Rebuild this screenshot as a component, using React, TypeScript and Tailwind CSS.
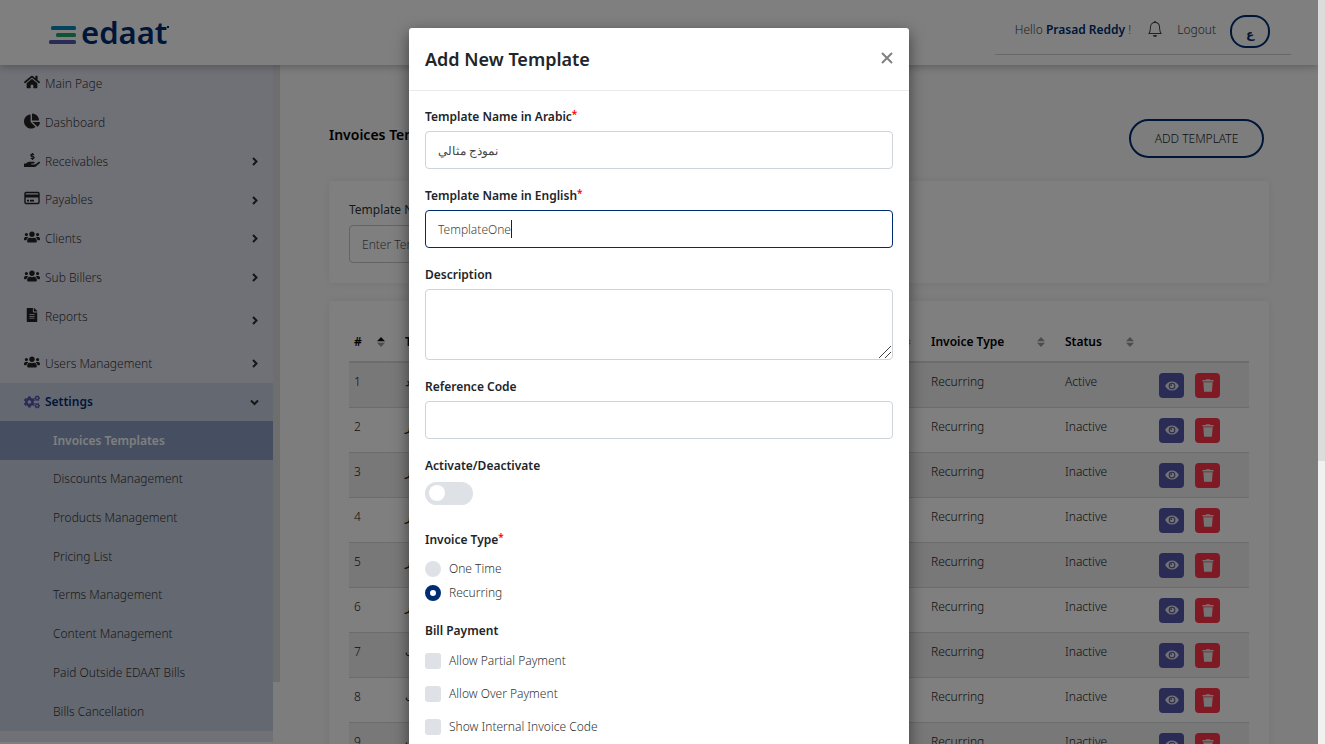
import { useState } from "react";
import type { ReactNode } from "react";
import type { IconType } from "react-icons";
import { FaChartPie, FaCogs, FaFileAlt, FaHandHoldingUsd, FaHome, FaUsers } from "react-icons/fa";
import { BsBell } from "react-icons/bs";

function CardIcon() {
  return (
    <svg width="16" height="16" viewBox="0 0 16 16" className="mb-1" aria-hidden="true">
      <rect x="1" y="2.5" width="14" height="11" rx="1" fill="none" stroke="#222" strokeWidth="1.4" />
      <path d="M1 4.5h14v3H1zM3 9.8h2v1.6H3zM6 9.8h4v1.6H6z" fill="#222" />
    </svg>
  );
}

const topLinks: { label: string; icon: IconType; expands: boolean }[] = [
  { label: "Main Page", icon: FaHome, expands: false },
  { label: "Dashboard", icon: FaChartPie, expands: false },
  { label: "Receivables", icon: FaHandHoldingUsd, expands: true },
  { label: "Payables", icon: CardIcon, expands: true },
  { label: "Clients", icon: FaUsers, expands: true },
  { label: "Sub Billers", icon: FaUsers, expands: true },
];

const settingsLinks = [
  "Discounts Management",
  "Products Management",
  "Pricing List",
  "Terms Management",
  "Content Management",
  "Paid Outside EDAAT Bills",
  "Bills Cancellation",
];

const templates = [
  { id: 1, ar: "نموذج جديد", en: "New", status: "Active" },
  { id: 2, ar: "نموذج شهر", en: "Month", status: "Inactive" },
  { id: 3, ar: "نموذج شهر", en: "Month", status: "Inactive" },
  { id: 4, ar: "نموذج شهر", en: "Month", status: "Inactive" },
  { id: 5, ar: "نموذج شهر", en: "Month", status: "Inactive" },
  { id: 6, ar: "نموذج شهر", en: "Month", status: "Inactive" },
  { id: 7, ar: "نموذج طلب", en: "Order", status: "Inactive" },
  { id: 8, ar: "نموذج طلب", en: "Order", status: "Inactive" },
  { id: 9, ar: "نموذج طلب", en: "Order", status: "Inactive" },
];

function Logo() {
  return (
    <a href="#home" aria-label="edaat" className="flex items-center gap-1 text-[#002d72]">
      <svg width="28" height="20" viewBox="0 0 28 20" className="mt-[8px]" aria-hidden="true">
        <rect x="2" y="0" width="25" height="4" rx="1.5" fill="#0a86b8" />
        <rect x="7" y="7" width="20" height="4" rx="1.5" fill="#22a268" />
        <rect x="0" y="14" width="27" height="4" rx="1.5" fill="#5558ac" />
      </svg>
      <span className="flex items-start text-[31px] leading-9 font-semibold">
        edaat
        <span className="mt-[12px] size-[2px] bg-[#002d72]" />
      </span>
    </a>
  );
}

function Header() {
  return (
    <header className="relative z-10 flex h-[65px] shrink-0 items-start justify-between bg-white pr-[27px] pl-[49px] shadow-[0_2px_8px_rgba(0,0,0,0.25)]">
      <div className="pt-[14px]">
        <Logo />
      </div>
      <div className="flex h-[55px] items-start border-b border-[#ced0d4] pt-[15px] pr-[21px] pl-5 text-xs text-[#444]">
        <span className="leading-[30px] font-light">
          Hello <b className="font-semibold text-[#002d72]">Prasad Reddy</b> !
        </span>
        <button type="button" aria-label="Notifications" className="mt-[6px] ml-4">
          <BsBell size={16} />
        </button>
        <a href="#logout" className="ml-[14px] leading-[30px] font-light">
          Logout
        </a>
        <button
          type="button"
          lang="ar"
          className="ml-[14px] h-[33px] w-10 rounded-2xl border-2 border-[#002d72] pt-1 text-xs leading-5 font-semibold text-[#002d72]"
        >
          ع
        </button>
      </div>
    </header>
  );
}

function Chevron({ down = false }: { down?: boolean }) {
  return (
    <svg width="9" height="9" viewBox="0 0 9 9" fill="none" stroke="#2c2c2c" strokeWidth="2" aria-hidden="true">
      <path d={down ? "M1 2.5l3.5 3.5L8 2.5" : "M3 1l3.5 3.5L3 8"} />
    </svg>
  );
}

function NavLink({ label, icon: Icon, expands }: { label: string; icon: IconType; expands: boolean }) {
  return (
    <a href="#section" className="flex items-center pr-[14px] pl-6 text-[#333]">
      <Icon size={16} className="mb-1 w-4 text-[#222]" />
      <span className="ml-[5px] flex-1">{label}</span>
      {expands && <Chevron />}
    </a>
  );
}

function Sidebar() {
  return (
    <div className="flex w-[280px] shrink-0 items-start">
      <nav className="h-[677px] w-[273px] bg-[#e1e3ef] text-xs font-light">
        <div className="grid h-[232px] grid-rows-6">
          {topLinks.map((link) => (
            <NavLink key={link.label} {...link} />
          ))}
        </div>
        <a href="#reports" className="flex h-[47px] items-center pr-[14px] pl-6 text-[#333]">
          <span className="mb-2 flex flex-1 items-center gap-[5px]">
            <FaFileAlt size={14} className="mb-1 w-4 text-[#222]" />
            Reports
          </span>
          <Chevron />
        </a>
        <div className="grid h-[39px]">
          <NavLink label="Users Management" icon={FaUsers} expands />
        </div>
        <div className="bg-[#c9d1e1]">
          <a href="#settings" className="flex h-[38px] items-center pr-[14px] pl-6 font-semibold text-[#002d72]">
            <FaCogs size={16} className="text-[#5558ac]" />
            <span className="ml-[5px] flex-1">Settings</span>
            <Chevron down />
          </a>
          <a href="#invoices" className="flex h-[39px] items-center bg-[#8b9ec2] pl-[53px] font-semibold text-white">
            Invoices Templates
          </a>
          <div className="grid h-[271px] grid-rows-7 pl-[53px]">
            {settingsLinks.map((label) => (
              <a key={label} href="#settings-page" className="flex items-center text-[#333]">
                {label}
              </a>
            ))}
          </div>
        </div>
      </nav>
      <div className="h-[617px] flex-1 bg-[#dcdcdc]" />
    </div>
  );
}

function EyeIcon() {
  return (
    <svg width="14" height="10" viewBox="0 0 14 10" aria-hidden="true">
      <path d="M7 .5C3.9.5 1.4 2.3.2 5c1.2 2.7 3.7 4.5 6.8 4.5s5.6-1.8 6.8-4.5C12.6 2.3 10.1.5 7 .5z" fill="currentColor" />
      <circle cx="7" cy="5" r="2.8" fill="none" stroke="#5558ac" strokeWidth="1.1" />
      <path d="M7 5V3.4H5.400V5z" fill="#5558ac" />
    </svg>
  );
}

function TrashIcon() {
  return (
    <svg width="12" height="13" viewBox="0 0 12 13" fill="currentColor" aria-hidden="true">
      <path d="M.5 1h3.200l.6-.8h3.400l.6.8h3.200v1.500H.5zM1.300 3.200h9.400l-.8 9.600H2.100z" />
    </svg>
  );
}

function SortIcon({ active = false }: { active?: boolean }) {
  return (
    <svg width="8" height="10" viewBox="0 0 8 10" className="shrink-0" aria-hidden="true">
      <path d="M4 0 8 4.2H0z" fill={active ? "#111" : "#999"} />
      <path d="M0 5.8H8L4 10z" fill="#999" />
    </svg>
  );
}

function HeadCell({ children, active }: { children: ReactNode; active?: boolean }) {
  return (
    <th scope="col" className="border-b-2 border-[#d5d8dc] px-[5px] pt-[2px] text-left font-semibold">
      <span className="flex items-center justify-between pr-[10px]">
        <span className="truncate">{children}</span>
        <SortIcon active={active} />
      </span>
    </th>
  );
}

function TemplatesTable() {
  return (
    <table className="w-full table-fixed border-collapse text-xs text-[#222]">
      <colgroup>
        <col className="w-[51px]" />
        <col />
        <col />
        <col className="w-[134px]" />
        <col className="w-[89px]" />
        <col className="w-[100px]" />
      </colgroup>
      <thead>
        <tr className="h-[42px] text-black">
          <HeadCell active>#</HeadCell>
          <HeadCell>Template Name in Arabic</HeadCell>
          <HeadCell>Template Name in English</HeadCell>
          <HeadCell>Invoice Type</HeadCell>
          <HeadCell>Status</HeadCell>
          <th scope="col" className="border-b-2 border-[#d5d8dc]" aria-label="Actions" />
        </tr>
      </thead>
      <tbody className="font-light">
        {templates.map((row) => (
          <tr key={row.id} className="h-[45px] border-b border-[#d5d8dc] align-top odd:bg-[#f0f0f0]">
            <td className="px-[5px] pt-[11px]">{row.id}</td>
            <td className="px-[5px] pt-[11px]">{row.ar}</td>
            <td className="px-[5px] pt-[11px]">{row.en}</td>
            <td className="px-[5px] pt-[11px]">Recurring</td>
            <td className="px-[5px] pt-[11px]">{row.status}</td>
            <td className="pt-[10px] pl-[10px]">
              <div className="flex gap-[11px]">
                <button type="button" aria-label="View" className="grid size-[25px] place-items-center rounded-[4px] bg-[#5558ac] text-[#e8e8e8]">
                  <EyeIcon />
                </button>
                <button type="button" aria-label="Delete" className="grid size-[25px] place-items-center rounded-[4px] bg-[#ff3347] text-[#e8e8e8]">
                  <TrashIcon />
                </button>
              </div>
            </td>
          </tr>
        ))}
      </tbody>
    </table>
  );
}

function MainContent() {
  return (
    <main className="min-w-0 flex-1 px-[49px] pt-[54px]">
      <div className="flex items-center justify-between pr-[5px]">
        <h1 className="mb-2 text-sm font-semibold text-black">Invoices Templates</h1>
        <button type="button" className="h-[39px] w-[135px] rounded-[20px] border-2 border-[#002d72] text-xs font-light text-[#222]">
          ADD TEMPLATE
        </button>
      </div>
      <section className="mt-[23px] h-[102px] rounded bg-white px-5 pt-5 shadow-[0_0_8px_rgba(0,0,0,0.08)]">
        <label htmlFor="search" className="block text-xs leading-[18px] text-[#333]">
          Template Name
        </label>
        <input
          id="search"
          placeholder="Enter Template Name"
          className="mt-[6px] h-[38px] w-[280px] rounded border border-[#c3c8ce] bg-white px-3 text-xs font-light placeholder:text-[#555]"
        />
      </section>
      <section className="mt-[18px] rounded bg-white px-5 pt-[19px] pb-5 shadow-[0_0_8px_rgba(0,0,0,0.08)]">
        <TemplatesTable />
      </section>
    </main>
  );
}

const fieldClass =
  "block w-full rounded border border-[#ced4da] bg-white px-3 text-xs font-light text-[#444] outline-none";

function RequiredMark() {
  return <span className="align-top text-[10px] leading-3 text-[#f00]">*</span>;
}

function FieldLabel({ htmlFor, children, required }: { htmlFor: string; children: ReactNode; required?: boolean }) {
  return (
    <label htmlFor={htmlFor} className="mb-[5px] block text-xs leading-[18px] font-semibold text-[#212529]">
      {children}
      {required && <RequiredMark />}
    </label>
  );
}

function RadioOption({ label, checked, onSelect }: { label: string; checked: boolean; onSelect: () => void }) {
  return (
    <label className="flex h-4 items-center gap-2 text-xs leading-[18px] font-light text-[#333]">
      <input
        type="radio"
        name="invoiceType"
        checked={checked}
        onChange={onSelect}
        className="size-4 appearance-none rounded-full bg-[#dee2e6] checked:border-5 checked:border-[#002d72] checked:bg-white"
      />
      {label}
    </label>
  );
}

function TemplateDialog() {
  const [english, setEnglish] = useState("TemplateOne");
  const [invoiceType, setInvoiceType] = useState("Recurring");

  return (
    <div
      role="dialog"
      aria-modal="true"
      aria-labelledby="dialog-title"
      className="w-full max-w-[500px] self-start rounded-[3px] bg-white pb-8 shadow-[0_5px_15px_rgba(0,0,0,0.5)]"
    >
      <div className="flex h-[63px] items-center justify-between border-b border-[#e9ecef] px-4">
        <h2 id="dialog-title" className="text-lg font-semibold text-[#212529]">
          Add New Template
        </h2>
        <button type="button" aria-label="Close" className="mb-[2px] text-[#808080]">
          <svg width="12" height="12" viewBox="0 0 12 12" fill="none" stroke="currentColor" strokeWidth="2" aria-hidden="true">
            <path d="M1 1l10 10M11 1L1 11" />
          </svg>
        </button>
      </div>
      <form className="px-4 pt-[17px]">
        <div className="mb-[18px]">
          <FieldLabel htmlFor="name-ar" required>Template Name in Arabic</FieldLabel>
          <input id="name-ar" defaultValue="نموذج مثالي" className={`${fieldClass} h-[38px]`} />
        </div>
        <div className="mb-[18px]">
          <FieldLabel htmlFor="name-en" required>Template Name in English</FieldLabel>
          <div className="relative">
            <input
              id="name-en"
              value={english}
              onChange={(event) => setEnglish(event.target.value)}
              className="block h-[38px] w-full rounded border border-[#002d72] bg-white px-3 text-xs font-light text-[#444] caret-transparent outline-none"
            />
            <span className="pointer-events-none absolute inset-y-0 left-[13px] flex items-center text-xs font-light" aria-hidden="true">
              <span className="invisible">{english}</span>
              <span className="h-[18px] w-px bg-[#222]" />
            </span>
          </div>
        </div>
        <div className="mb-[18px]">
          <FieldLabel htmlFor="description">Description</FieldLabel>
          <div className="relative">
            <textarea id="description" className={`${fieldClass} h-[71px] resize-none py-2`} />
            <svg width="12" height="12" viewBox="0 0 12 12" className="absolute right-[2px] bottom-[2px]" stroke="#444" aria-hidden="true">
              <path d="M0 12L12 0M6 12l6-6" />
            </svg>
          </div>
        </div>
        <div className="mb-[18px]">
          <FieldLabel htmlFor="reference">Reference Code</FieldLabel>
          <input id="reference" className={`${fieldClass} h-[38px]`} />
        </div>
        <FieldLabel htmlFor="active">Activate/Deactivate</FieldLabel>
        <input
          id="active"
          type="checkbox"
          role="switch"
          className="mt-[7px] block h-[23px] w-12 appearance-none rounded-full bg-[#dee2e6] pt-[3px] pl-1 before:block before:size-4 before:rounded-full before:bg-white checked:bg-[#002d72] checked:pl-7"
        />
        <fieldset className="mt-[26px]">
          <legend className="mb-3 text-xs leading-[18px] font-semibold text-[#212529]">
            Invoice Type
            <RequiredMark />
          </legend>
          <div className="flex flex-col gap-2">
            {["One Time", "Recurring"].map((option) => (
              <RadioOption
                key={option}
                label={option}
                checked={invoiceType === option}
                onSelect={() => setInvoiceType(option)}
              />
            ))}
          </div>
        </fieldset>
        <fieldset className="mt-[21px]">
          <legend className="mb-[13px] text-xs leading-[18px] font-semibold text-[#212529]">Bill Payment</legend>
          <div className="flex flex-col gap-[17px]">
            {["Allow Partial Payment", "Allow Over Payment", "Show Internal Invoice Code"].map((option) => (
              <label key={option} className="flex h-4 items-center gap-2 text-xs leading-[18px] font-light text-[#333]">
                <input type="checkbox" className="size-4 appearance-none rounded-[3px] bg-[#dee2e6] checked:bg-[#002d72]" />
                {option}
              </label>
            ))}
          </div>
        </fieldset>
      </form>
    </div>
  );
}

export default function App() {
  return (
    <div className="relative h-screen overflow-hidden bg-[#fbfbfb] font-['Noto_Sans','DejaVu_Sans',sans-serif]">
      <div className="mr-[7px] flex h-full flex-col overflow-hidden">
        <Header />
        <div className="flex min-h-0 flex-1">
          <Sidebar />
          <MainContent />
        </div>
      </div>
      <div className="absolute inset-0 z-20 flex">
        <div className="flex flex-1 justify-center overflow-hidden bg-black/50 pt-7">
          <TemplateDialog />
        </div>
        <div className="w-[7px] bg-[#f1f1f1]">
          <div className="h-[62%] bg-[#dcdcdc]" />
        </div>
      </div>
    </div>
  );
}
